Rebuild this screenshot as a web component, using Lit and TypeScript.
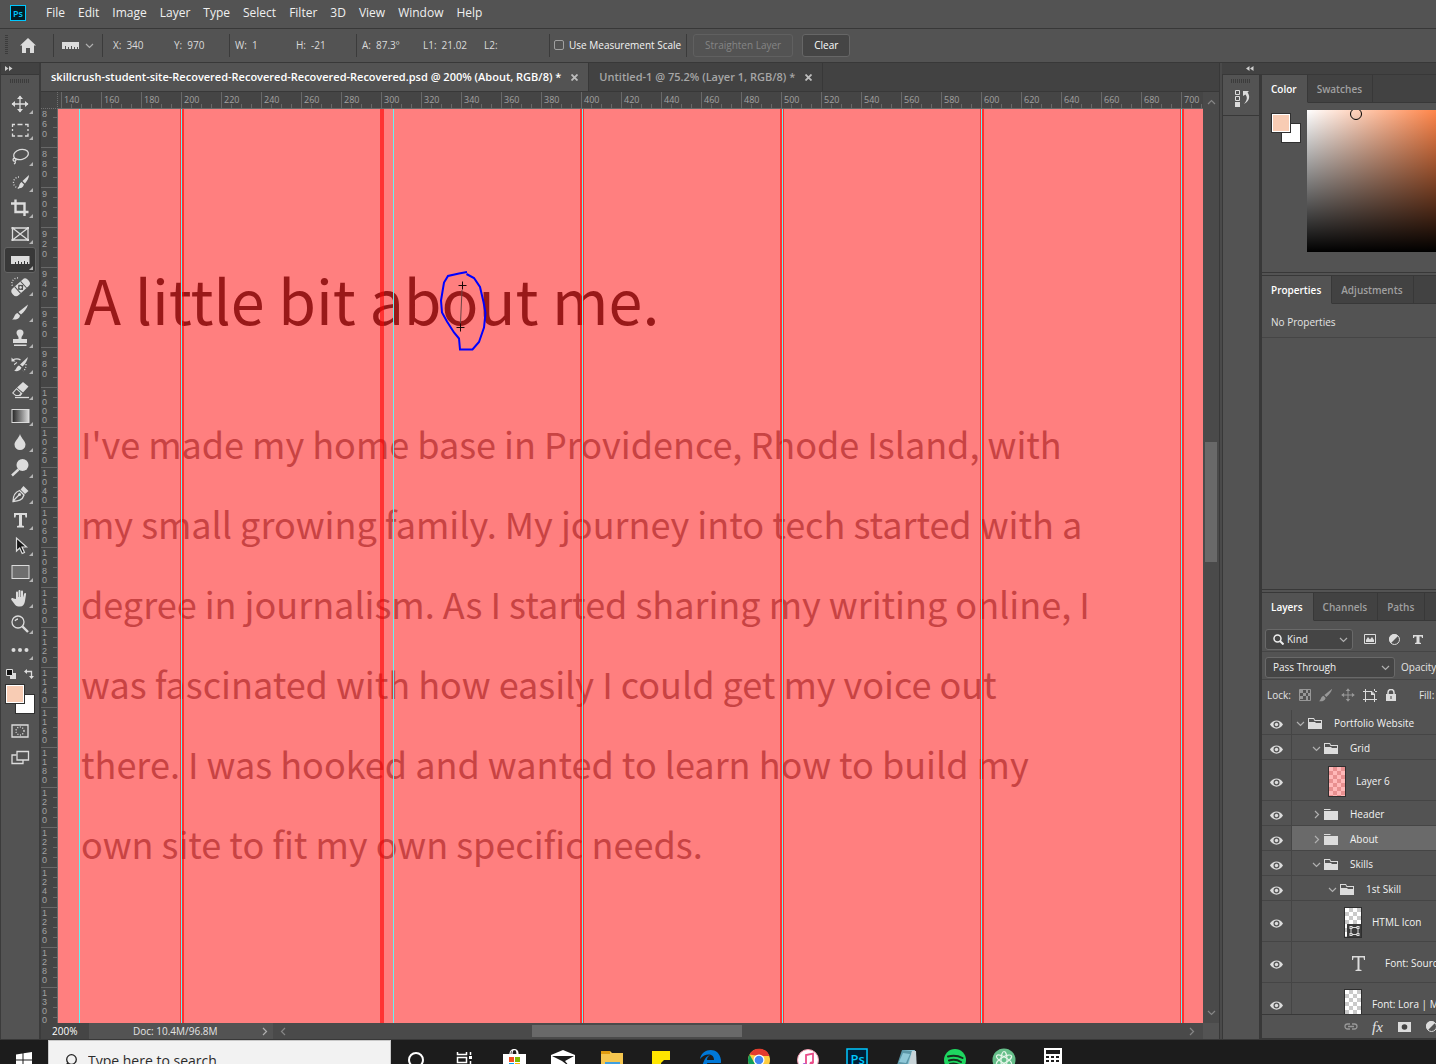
import { LitElement, html, svg, css, nothing } from "lit";
import { customElement, state } from "lit/decorators.js";
import { classMap } from "lit/directives/class-map.js";
import { styleMap } from "lit/directives/style-map.js";

const MENUS = ["File", "Edit", "Image", "Layer", "Type", "Select", "Filter", "3D", "View", "Window", "Help"];

const READOUTS = [
  [["X:", "340"], ["Y:", "970"]],
  [["W:", "1"], ["H:", "-21"]],
  [["A:", "87.3º"], ["L1:", "21.02"], ["L2:", ""]],
];

const TOOLS: { name: string; icon: unknown }[] = [
  { name: "Move", icon: svg`<path d="M12 4v16M4 12h16" class="l"/><path d="M12 3.500l3 3.500h-6zM12 20.500l3-3.500h-6zM3.500 12l3.500-3v6zM20.500 12l-3.500-3v6z"/>` },
  { name: "Rectangular marquee", icon: svg`<path d="M4.500 9V6.500H7M9.500 6.500h5M17 6.500h3V9M20 11v2M20 15.500V18h-3M14.500 18h-5M7 18H4.500v-2.500M4.500 13v-2" class="l"/>` },
  { name: "Lasso", icon: svg`<ellipse cx="13" cy="10.500" rx="7.500" ry="5" transform="rotate(-14 13 10.500)" class="l"/><path d="M7 14c-3 0-2 4 0 3s1-3-1-2.500M7 17c1 1 0 2.500-1 3" class="l"/>` },
  { name: "Quick selection", icon: svg`<path d="M11 7a5.500 5.500 0 1 0 0 11" class="l dots"/><path d="M21 5l-6.500 6 2.500 2.500c2-2.500 4-5.500 4-8.500zM13.500 12l2.500 2.500c-1 3-3 4-6.500 4 2-1.500 1.500-5 4-6.500z"/>` },
  { name: "Crop", icon: svg`<path d="M7.500 3.500v12.500h13M3 7.500h13.500V20" class="l w2"/>` },
  { name: "Frame", icon: svg`<path d="M4.500 6h15.500v12H4.500zM4.500 6L20 18M20 6L4.500 18" class="l"/><path d="M3.500 5h2v2h-2zM19 5h2v2h-2zM3.500 17h2v2h-2zM19 17h2v2h-2z"/>` },
  { name: "Ruler", icon: svg`<path d="M3 8h18.500v8h-1.500v-2h-1v2h-2v-3h-1v3h-2v-2h-1v2h-2v-3h-1v3H8v-2H7v2H3z"/>` },
  { name: "Healing brush", icon: svg`<path d="M10 4a5.500 5.500 0 0 0-5.500 8" class="l dots"/><g transform="rotate(-42 13 13)"><rect x="2" y="8.500" width="21" height="9" rx="4"/><path d="M8 8.500h1v9H8zM16 8.500h1v9h-1z" fill="#535353"/><path d="M12.500 9.500l3.500 3.500-3.500 3.500L9 13z" fill="#535353"/><circle cx="12.500" cy="13" r="1.300"/></g>` },
  { name: "Brush", icon: svg`<path d="M20 4.500L10.500 12l2.500 2.500c3-2.500 6-6 7-10zM9.500 13l2.500 2.500c-.5 3.500-4 4.500-8 4 2.500-1 2-5.500 5.500-6.500z"/>` },
  { name: "Clone stamp", icon: svg`<path d="M10.500 11.500c0-1.500-2-2.500-2-4.500a3.500 3.500 0 0 1 7 0c0 2-2 3-2 4.500v1.500H19v4H5v-4h5.500zM6 18.500h12.500v1.500H6z"/>` },
  { name: "History brush", icon: svg`<path d="M20 5l-8 7.500 2.500 2c3-2.500 4.500-5.500 5.500-9.500zM11 13.500l2.500 2c-1 3.500-4 4-7.500 3.500 2.500-1 2-4.500 5-5.500z"/><path d="M4.500 8c3-1.500 6-1.500 8 0M9 10.500c-2 1-2 2-3 2" class="l"/><path d="M18 12c0 4-1 6-3 7" class="l dots"/><path d="M3.500 5.500v4h4z"/>` },
  { name: "Eraser", icon: svg`<path d="M15 4l5.500 4.500-5.500 6-6-5zM8.500 10l6 5.500-2 2.500H7.500L4 15z"/><path d="M8.500 11.500l4 3.500-1.500 2H8l-2.500-2z" fill="#535353"/><path d="M7 19.500h14" class="l"/>` },
  { name: "Gradient", icon: svg`<rect x="4" y="5.500" width="17" height="13" fill="url(#ramp)" stroke="#dcdcdc"/>` },
  { name: "Blur", icon: svg`<path d="M12 4c1 4 5.500 7 5.500 10.500a5.500 5.500 0 0 1-11 0c0-3.500 4.500-6.500 5.500-10.500z"/>` },
  { name: "Dodge", icon: svg`<circle cx="14.500" cy="9" r="6"/><path d="M10.500 13.500L4 19.500" class="l w2"/>` },
  { name: "Pen", icon: svg`<path d="M5 19.500c0-5 1-9 6.500-11l4.500 4.500c-1.500 5.500-6 6-11 6.500zM5 19l6-6" class="l"/><circle cx="11.500" cy="12.500" r="1.500"/><path d="M12.500 7.500l3-3.500 5 5-3.500 3z"/>` },
  { name: "Type", icon: svg`<path d="M6 5h13v4.500h-1.500L17 7h-3v10.500l2 .5v1.500H9V18l2-.5V7H8l-.5 2.500H6z"/>` },
  { name: "Path selection", icon: svg`<path d="M8.500 4v13l3.200-3 2.500 5.500 2.300-1-2.500-5.500h4.500z" fill="#161616" stroke="#dcdcdc" stroke-width="1.200"/>` },
  { name: "Rectangle", icon: svg`<rect x="4" y="5.500" width="17" height="13" fill="#6e6e6e" stroke="#dcdcdc"/>` },
  { name: "Hand", icon: svg`<path d="M8 13V6.500c0-1.500 2-1.500 2 0V11h.5V5c0-1.500 2-1.500 2 0v6h.5V5.500c0-1.500 2-1.500 2 0V11.500l1-3.500c.5-1.500 2.500-1 2 .5L17 15c-.5 3.500-2 5.500-5 5.500h-1.500c-2 0-3-1-4-2.500L3.500 14c-1-1.500.5-2.500 2-1.500z"/>` },
  { name: "Zoom", icon: svg`<circle cx="10" cy="10" r="6" class="l"/><path d="M14.500 14.500l5.500 5.500" class="l w2"/><path d="M7 9a3.500 3.500 0 0 1 3-2" class="l"/>` },
  { name: "More tools", icon: svg`<circle cx="5.500" cy="12" r="2"/><circle cx="12" cy="12" r="2"/><circle cx="18.500" cy="12" r="2"/>` },
];

const BODY_LINES = [
  "I've made my home base in Providence, Rhode Island, with",
  "my small growing family. My journey into tech started with a",
  "degree in journalism. As I started sharing my writing online, I",
  "was fascinated with how easily I could get my voice out",
  "there. I was hooked and wanted to learn how to build my",
  "own site to fit my own specific needs.",
];

const BANDS = [122, 322, 522, 722, 922, 1122];
const GUIDES = [21, 123, 335, 524, 724, 923, 1123];

type Layer = { name: string; level: number; kind: "open" | "closed" | "pink" | "shape" | "type" | "pixel"; selected?: boolean };
const LAYERS: Layer[] = [
  { name: "Portfolio Website", level: 0, kind: "open" },
  { name: "Grid", level: 1, kind: "open" },
  { name: "Layer 6", level: 2, kind: "pink" },
  { name: "Header", level: 1, kind: "closed" },
  { name: "About", level: 1, kind: "closed", selected: true },
  { name: "Skills", level: 1, kind: "open" },
  { name: "1st Skill", level: 2, kind: "open" },
  { name: "HTML Icon", level: 3, kind: "shape" },
  { name: "Font: Source Sans Pro", level: 3, kind: "type" },
  { name: "Font: Lora | Medium", level: 3, kind: "pixel" },
];

const TASKS: { name: string; icon: unknown }[] = [
  { name: "Cortana", icon: svg`<circle cx="12" cy="12" r="7" fill="none" stroke="#fff" stroke-width="2"/>` },
  { name: "Task view", icon: svg`<path d="M4.500 4v2.500h9V4M4.500 20v-2.500h9V20M4.500 9.500h9v5h-9zM17.500 4v3M17.500 13v7" fill="none" stroke="#fff" stroke-width="1.500"/><path d="M16 8h3v3h-3z" fill="#fff"/>` },
  { name: "Store", icon: svg`<path d="M8 6c0-6 8-6 8 0M10 6c0-6 5-6 5 0" fill="none" stroke="#fff" stroke-width="1.200"/><path d="M1 6h23v18H1z" fill="#fff"/><path d="M7 9h5v5H7z" fill="#f25022"/><path d="M13 9h5v5h-5z" fill="#7fba00"/><path d="M7 15h5v5H7z" fill="#00a4ef"/><path d="M13 15h5v5h-5z" fill="#ffb900"/>` },
  { name: "Mail", icon: svg`<path d="M0 7l12-5 12 5v16H0z" fill="#fff"/><path d="M1 8h22l-9 5 5 6-8-6z" fill="#1c1c1c"/>` },
  { name: "File explorer", icon: svg`<path d="M1 3h9l2 2h11v18H1z" fill="#f5c64f"/><path d="M1 3h9v3H1z" fill="#e09c10"/><path d="M5 14h15v9H5z" fill="#3f9fe0"/>` },
  { name: "Sticky notes", icon: svg`<path d="M3 3h18v20H3z" fill="#ffe600"/><path d="M21 12v11h-9v-8l3-3z" fill="#1c1c1c"/>` },
  { name: "Edge", icon: svg`<path d="M2 11C4 0 21-2 23 12v3H9c1 6 8 6 12 3.500v4.500C9 28 2 20 6 13c1-3 3-5 6-6-2 1.500-3 3-3 5h7c0-7-9-7-14-1z" fill="#0078d7"/>` },
  { name: "Chrome", icon: svg`<circle cx="12" cy="12" r="11" fill="#ffcd40"/><path d="M2.500 6.500A11 11 0 0 1 22.500 8H12z" fill="#e33b2e"/><path d="M2.500 6.500L8 16l3 7A11 11 0 0 1 2.500 6.500z" fill="#109d58"/><circle cx="12" cy="12" r="5.500" fill="#fff"/><circle cx="12" cy="12" r="4.300" fill="#4285f4"/>` },
  { name: "iTunes", icon: svg`<circle cx="12" cy="12" r="10.500" fill="#fff" stroke="#f29ab0"/><path d="M10 17V7l7-1.500V15" fill="none" stroke="#ea4c89" stroke-width="1.800"/><circle cx="8.500" cy="17" r="2" fill="#a55ad8"/><circle cx="15.500" cy="15.500" r="2" fill="#ea4c89"/>` },
  { name: "Photoshop", icon: svg`<rect x="2" y="1" width="20" height="22" fill="#001e36" stroke="#00c8ff" stroke-width="1.500"/><text x="5.500" y="16" class="pstext" font-size="13">Ps</text>` },
  { name: "Notepad", icon: svg`<path d="M9 2h12l-5 21H2z" fill="#8fc8d8"/><path d="M8 2l10 1-7 20H1z" fill="#5c97a8"/><path d="M9 5l7 1-4 9-7-1z" fill="#8fc8d8"/><path d="M18 3l4 0 1 20h-10z" fill="#c8d4d8"/>` },
  { name: "Spotify", icon: svg`<circle cx="12" cy="12" r="11" fill="#1ed760"/><path d="M5 8.500c5-1.500 10-1 14.500 1.500M6 12.500c4-1.200 8.500-.8 12 1.500M7 16c3.500-1 6.500-.6 9.500 1.200" fill="none" stroke="#16301e" stroke-width="2" stroke-linecap="round"/>` },
  { name: "Atom", icon: svg`<circle cx="12" cy="12" r="11.500" fill="#66bf8a"/><g fill="none" stroke="#e3f5e8" stroke-width="1.200"><ellipse cx="12" cy="12" rx="3" ry="8.500"/><ellipse cx="12" cy="12" rx="3" ry="8.500" transform="rotate(60 12 12)"/><ellipse cx="12" cy="12" rx="3" ry="8.500" transform="rotate(120 12 12)"/></g>` },
  { name: "Calculator", icon: svg`<path d="M3 0h18v24H3z" fill="#fff"/><path d="M5 2h14v4H5zM5 8h3v2H5zM10 8h3v2h-3zM15 8h3v2h-3zM5 12h3v2H5zM10 12h3v2h-3zM15 12h3v2h-3z" fill="#1c1c1c"/>` },
];

const range = (from: number, to: number, step: number) =>
  Array.from({ length: Math.floor((to - from) / step) + 1 }, (_, i) => from + i * step);

const icon = (body: unknown, size = 24, cls = "") =>
  html`<svg class="ic ${cls}" width=${size} height=${size} viewBox="0 0 24 24" aria-hidden="true">${body}</svg>`;

const chevron = (dir: "up" | "down" | "left" | "right") => {
  const d = { up: "M1 6l3.500-3.500L8 6", down: "M1 3l3.500 3.500L8 3", left: "M6 1L2.500 4.500 6 8", right: "M3 1l3.500 3.500L3 8" }[dir];
  return html`<svg class="chev" width="9" height="9" viewBox="0 0 9 9" aria-hidden="true"><path d=${d} /></svg>`;
};

const doubleArrow = (flip: boolean) => html`<svg width="8" height="5" viewBox="0 0 8 5" aria-hidden="true">
  <path d=${flip ? "M3.500 0v5L0 2.500zM7.500 0v5L4 2.500z" : "M0 0v5l3.500-2.500zM4 0v5l3.500-2.500z"} fill="#cfcfcf" />
</svg>`;

const psLogo = html`<svg width="16" height="16" viewBox="0 0 16 16" aria-hidden="true">
  <rect x=".5" y=".5" width="15" height="15" fill="#001d26" stroke="#00c8ff" />
  <text x="3" y="11.500" class="pstext" font-size="9">Ps</text>
</svg>`;

@customElement("app-root")
export class AppRoot extends LitElement {
  @state() private activeTool = "Ruler";

  static styles = css`
    :host { display: flex; flex-direction: column; height: 100vh; overflow: hidden; background: #535353; color: #e4e4e4; font: 10px/16px "Open Sans", "Noto Sans", sans-serif; }
    * { box-sizing: border-box; }
    button, input, select { font: inherit; color: inherit; background: none; border: 0; padding: 0; margin: 0; border-radius: 0; outline: 0; }
    button { display: flex; align-items: center; justify-content: center; flex: none; }
    svg { flex: none; display: block; }
    h1, h2, p, ul { margin: 0; padding: 0; font-weight: inherit; list-style: none; }
    .ic { fill: #dcdcdc; }
    .l { fill: none; stroke: #dcdcdc; stroke-width: 1.3; }
    .w2 { stroke-width: 2.4; }
    .dots { stroke-dasharray: 1 1.6; }
    .chev path { fill: none; stroke: #b0b0b0; stroke-width: 1.2; }
    .vbar .chev path, .hbar .chev path { stroke: #868686; }
    .pstext { fill: #00c8ff; font-family: "Open Sans", sans-serif; font-weight: 600; }

    .menubar { display: flex; align-items: center; flex: none; height: 29px; padding-left: 10px; padding-bottom: 3px; border-bottom: 1px solid #383838; }
    .menubar nav { display: flex; gap: 13px; margin-left: 20px; }
    .menubar button { font-size: 12px; line-height: 20px; color: #f0f0f0; }

    .options { display: flex; align-items: center; flex: none; height: 34px; border-bottom: 1px solid #383838; padding: 0 0 1px 5px; color: #dadada; }
    .grip-v { width: 3px; height: 20px; background: repeating-linear-gradient(#3c3c3c 0 1px, transparent 1px 2px); }
    .home { width: 40px; margin-right: 5px; }
    .sep { width: 1px; height: 23px; background: #3b3b3b; flex: none; }
    .preset { width: 48px; gap: 6px; }
    .group { display: flex; width: 126px; padding-left: 5px; flex: none; }
    .group:first-of-type { padding-left: 10px; }
    .group.wide { width: 192px; }
    .field { display: flex; gap: 5px; width: 61px; flex: none; }
    .field:last-child { flex: 1; min-width: 0; }
    .scale { display: flex; align-items: center; gap: 5px; width: 136px; padding-left: 4px; flex: none; color: #f4f4f4; white-space: nowrap; }
    .scale input { appearance: none; width: 10px; height: 10px; border: 1px solid #a0a0a0; border-radius: 2px; flex: none; }
    .push { height: 23px; padding: 0 11px; border: 1px solid #666; border-radius: 3px; background: #454545; color: #fff; margin-left: 9px; }
    .push:disabled { background: none; border-color: #606060; color: #858585; margin-left: 6px; }

    .work { display: flex; flex: 1; min-height: 0; }
    .tools { display: flex; flex-direction: column; flex: none; width: 41px; border-left: 1px solid #3b3b3b; border-right: 2px solid #3b3b3b; align-items: center; }
    .cap { display: flex; align-items: center; align-self: stretch; height: 12px; flex: none; background: #424242; border-bottom: 1px solid #383838; padding-left: 4px; }
    .grip-h { width: 20px; height: 4px; margin: 4px 0 8px; background: repeating-linear-gradient(90deg, #3c3c3c 0 1px, transparent 1px 2px); flex: none; }
    .tool { position: relative; width: 32px; height: 26px; border: 1px solid transparent; border-radius: 3px; }
    .tool.on { background: #383838; border-color: #646464; }
    .tool::after { content: ""; position: absolute; right: 2px; bottom: 2px; border: 2px solid transparent; border-right-color: #b4b4b4; border-bottom-color: #b4b4b4; }
    .tool .ic, .modes .ic { width: 24px; height: 24px; }
    .mini { display: flex; justify-content: space-between; width: 28px; margin: 6px 0 5px; }
    .chips { display: grid; grid-template: repeat(3, 10px) / repeat(3, 10px); flex: none; }
    .fg, .bg { border: 1px solid #303030; width: auto; height: auto; }
    .fg { grid-area: 1 / 1 / 3 / 3; background: #f8ccb4; box-shadow: inset 0 0 0 1px #fff; z-index: 1; }
    .bg { grid-area: 2 / 2 / 4 / 4; background: #fff; }
    .modes { display: flex; flex-direction: column; align-items: center; gap: 3px; padding-top: 5px; }

    .doc { display: flex; flex-direction: column; flex: 1; min-width: 0; border-right: 1px solid #383838; }
    .tabs { display: flex; flex: none; height: 29px; background: #424242; border-bottom: 1px solid #383838; color: #a6a6a6; font-weight: 600; font-size: 11px; }
    .tab { display: flex; align-items: center; border-right: 1px solid #383838; padding: 0 10px; gap: 10px; white-space: nowrap; flex: none; }
    .tab.on { background: #535353; color: #fff; }
    .stage { display: grid; grid-template: 17px minmax(0, 1fr) 16px / 17px minmax(0, 1fr) 16px; flex: 1; min-height: 0; }
    .corner { background: #454545; border-right: 1px dotted #707070; border-bottom: 1px dotted #707070; }
    .rule-h { display: flex; overflow: hidden; background: #454545; border-bottom: 1px solid #686868; padding-left: 3px; color: #a2a2a2; }
    .cell-h { flex: none; width: 40px; border-left: 1px solid #686868; padding-left: 2px; line-height: 16px; font-size: 9px;
      background: repeating-linear-gradient(90deg, transparent 0 9px, #686868 9px 10px) 0 100% / 39px 4px no-repeat; }
    .rule-v { overflow: hidden; background: #454545; border-right: 1px solid #686868; color: #a2a2a2; font-family: "Liberation Sans", sans-serif; }
    .cell-v { height: 40px; border-top: 1px solid #686868; padding: 1px 0 0 1px; font-size: 9px; line-height: 10px;
      background: repeating-linear-gradient(transparent 0 9px, #686868 9px 10px) 100% 0 / 4px 39px no-repeat; }
    .cell-v:first-child { height: 38px; padding-top: 0; border-top: 0; background-position-y: -1px; }
    .cell-v.long { line-height: 9px; }
    .digit { display: block; }
    .canvas { position: relative; overflow: hidden; background: #ff7f7f; font-family: "Noto Sans CJK SC", sans-serif; padding: 142px 0 0 23px; white-space: nowrap; }
    .canvas h1 { font-size: 61px; line-height: 96px; color: #991919; padding-left: 3px; }
    .copy { font-size: 36px; line-height: 80px; color: #c84343; padding-top: 56px; }
    .band, .guide { position: absolute; top: 0; bottom: 0; }
    .band { width: 4px; background: rgba(255, 0, 0, 0.6); }
    .guide { width: 1px; background: #66f2f2; }
    .marks { position: absolute; left: 0; top: 0; }
    .vbar, .hbar { display: flex; align-items: center; background: #4a4a4a; }
    .vbar { flex-direction: column; grid-row: 1 / 3; grid-column: 3; padding: 6px 0; }
    .track { flex: 1; align-self: stretch; display: flex; }
    .vbar .track { flex-direction: column; align-items: center; }
    .hbar .track { align-items: center; }
    .thumb { background: #696969; flex: none; }
    .vbar .thumb { width: 12px; }
    .hbar .thumb { height: 12px; }
    .status { grid-column: 1 / 3; display: flex; }
    .zoom { width: 48px; padding-left: 11px; color: #fff; flex: none; background: #454545; }
    .info { display: flex; align-items: center; width: 184px; background: #535353; padding: 0 4px 0 44px; flex: none; }
    .info span { flex: 1; }
    .hbar { flex: 1; padding: 0 7px 0 6px; }

    .side { display: grid; grid-template: 12px minmax(0, 1fr) / 39px 175px; flex: none; border-left: 2px solid #4a4a4a; }
    .side .cap { grid-column: 1 / 3; padding-left: 24px; }
    .strip { border-left: 1px solid #383838; border-right: 2px solid #383838; display: flex; flex-direction: column; align-items: center; }
    .strip button { align-self: stretch; height: 29px; padding: 0 0 7px 2px; border-bottom: 1px solid #383838; }
    .strip .grip-h { margin-bottom: 4px; }
    .panels { display: flex; flex-direction: column; min-width: 0; overflow: hidden; border-left: 1px solid #383838; }
    .panel { border-bottom: 1px solid #383838; flex: none; }
    .panel + .panel { margin-top: 2px; border-top: 1px solid #383838; }
    .ptabs { display: flex; height: 28px; background: #424242; }
    .ptab { padding: 0 10px 0 9px; border-right: 1px solid #383838; border-bottom: 1px solid #383838; color: #a0a0a0; font-weight: 600; }
    .ptab.on { background: #535353; color: #fff; border-bottom-color: transparent; }
    .ptabs::after { content: ""; flex: 1; border-bottom: 1px solid #383838; }
    .color { display: flex; gap: 6px; height: 169px; padding: 7px 0 20px 9px; }
    .color .chips { align-self: flex-start; padding-top: 3px; }
    .picker { position: relative; flex: 1; background: linear-gradient(to top, #000, transparent), linear-gradient(to right, #fff, #ff8549); overflow: hidden; }
    .ring { position: absolute; left: 43px; top: -2px; width: 12px; height: 12px; border: 1px solid #000; border-radius: 6px; }
    .props { flex: 1; }
    .props p { height: 34px; padding: 10px 8px 0 9px; border-bottom: 1px solid #454545; }
    .line { display: flex; align-items: center; border-bottom: 1px solid #454545; white-space: nowrap; }
    .filter { height: 31px; padding: 6px 0 0 3px; }
    .blend { height: 28px; padding: 3px 0 0 3px; }
    .lock { height: 30px; padding-left: 5px; gap: 8px; border: 0; }
    .lock .fill { margin-left: 14px; }
    .drop { display: flex; align-items: center; height: 21px; border: 1px solid #696969; border-radius: 3px; background: #454545; padding: 0 4px 0 7px; color: #f0f0f0; flex: none; }
    .drop select { appearance: none; flex: 1; min-width: 0; line-height: 16px; }
    .kind { width: 88px; gap: 3px; margin-right: 5px; }
    .mode { width: 130px; margin-right: 6px; }
    .filter > button { width: 24px; }
    .dim { opacity: 0.5; }
    .list { height: 304px; overflow: hidden; }
    .row { display: flex; height: 25px; border-bottom: 1px solid #454545; white-space: nowrap; align-items: stretch; }
    .row.tall { height: 41px; }
    .row.sel .body { background: #6a6a6a; }
    .eye { width: 30px; border-right: 1px solid #454545; padding-top: 4px; }
    .body { display: flex; align-items: center; flex: 1; min-width: 0; padding: 2px 0 0 3px; color: #f2f2f2; }
    .indent { flex: none; }
    .twist { width: 11px; display: flex; justify-content: center; flex: none; }
    .folder { margin: 0 12px 0 2px; }
    .thumbnail { width: 18px; height: 31px; border: 1px solid #2e2e2e; margin-right: 10px; flex: none; display: flex; align-items: flex-end; justify-content: flex-end;
      background: repeating-conic-gradient(#cacaca 0 25%, #fff 0 50%) 0 0 / 8px 8px; }
    .thumbnail.pink { background: repeating-conic-gradient(#e89090 0 25%, #ffb8b8 0 50%) 0 0 / 8px 8px; }
    .glyph { width: 41px; padding-left: 7px; flex: none; }
    .foot { display: flex; align-items: center; height: 24px; padding-left: 81px; gap: 12px; border-top: 1px solid #383838; }
    .foot button { width: 15px; }
    .fx { font: italic 15px/16px "Liberation Serif", serif; }

    .taskbar { display: flex; align-items: flex-start; flex: none; height: 25px; border-top: 1px solid #383838; background: #1c1c1c; overflow: hidden; }
    .taskbar button { height: 40px; width: 49px; }
    .taskbar .start { width: 48px; }
    .search { display: flex; align-items: center; gap: 11px; height: 40px; width: 343px; padding-left: 14px; background: #f2f2f2; border: 1px solid #c8c8c8; border-bottom: 0; color: #2b2b2b; flex: none; }
    .search input { flex: 1; min-width: 0; font-size: 14px; line-height: 20px; }
    .search input::placeholder { color: #2b2b2b; opacity: 1; }
  `;

  private tabHead(names: string[]) {
    return html`<div class="ptabs" role="tablist">
      ${names.map((n, i) => html`<button role="tab" class=${classMap({ ptab: true, on: i === 0 })}>${n}</button>`)}
    </div>`;
  }

  private chips() {
    return html`<div class="chips"><button class="fg" aria-label="Foreground color"></button><button class="bg" aria-label="Background color"></button></div>`;
  }

  private closeMark() {
    return html`<svg width="7" height="7" viewBox="0 0 7 7" aria-hidden="true"><path d="M.5.5l6 6M6.500.5l-6 6" stroke="#bdbdbd" stroke-width="1.800" /></svg>`;
  }

  private layerIcon(l: Layer) {
    if (l.kind === "open" || l.kind === "closed") {
      return html`<span class="twist">${chevron(l.kind === "open" ? "down" : "right")}</span>
        <svg class="folder" width="14" height="11" viewBox="0 0 14 11" aria-hidden="true">
          ${l.kind === "open"
            ? svg`<path d="M0 0h6l1 2h7v9H0z" fill="#dcdcdc"/><path d="M1 1h4.500l1 2H13v2H8L7 4H1z" fill="#535353"/>`
            : svg`<path d="M0 0h6l1 1H0zM0 2h14v9H0z" fill="#dcdcdc"/>`}
        </svg>`;
    }
    if (l.kind === "type") {
      return html`<span class="glyph"><svg width="15" height="15" viewBox="0 0 15 15" aria-hidden="true"><path d="M1 0h13v4h-1l-.5-2.500H8.500v12l2 .5v1h-6v-1l2-.5v-12H2.500L2 4H1z" fill="#dcdcdc" /></svg></span>`;
    }
    return html`<span class=${classMap({ thumbnail: true, pink: l.kind === "pink" })}>
      ${l.kind === "shape"
        ? html`<svg width="14" height="13" viewBox="0 0 14 13" aria-hidden="true"><path d="M0 0h14v13H0z" fill="#3a3a3a" /><path d="M4 3.500h7v7H4z" fill="none" stroke="#dcdcdc" /><path d="M2.500 2h3v3h-3zM9.500 2h3v3h-3zM2.500 9h3v3h-3zM9.500 9h3v3h-3z" fill="#dcdcdc" /><path d="M3.500 3h1v1h-1zM10.500 3h1v1h-1zM3.500 10h1v1h-1zM10.500 10h1v1h-1z" fill="#3a3a3a" /></svg>`
        : nothing}
    </span>`;
  }

  private layerRow(l: Layer) {
    const folder = l.kind === "open" || l.kind === "closed";
    const indent = folder ? l.level * 16 : 1 + l.level * 16;
    return html`<li class=${classMap({ row: true, tall: !folder, sel: !!l.selected })}>
      <button class="eye" aria-label="Toggle visibility of ${l.name}">
        <svg width="13" height="9" viewBox="0 0 13 9" aria-hidden="true"><path d="M0 4.500C3-1 10-1 13 4.500 10 10 3 10 0 4.500z" fill="#dcdcdc" /><circle cx="6.500" cy="4.500" r="3" fill="#535353" /><circle cx="6.500" cy="4.500" r="1.700" fill="#dcdcdc" /></svg>
      </button>
      <div class="body">
        <span class="indent" style=${styleMap({ width: `${indent}px` })}></span>
        ${this.layerIcon(l)}<span>${l.name}</span>
      </div>
    </li>`;
  }

  render() {
    return html`
      <header class="menubar">
        ${psLogo}
        <nav>${MENUS.map((m) => html`<button>${m}</button>`)}</nav>
      </header>

      <div class="options">
        <span class="grip-v"></span>
        <button class="home" aria-label="Home"><svg width="16" height="15" viewBox="0 0 16 15"><path d="M8 0l8 7.500h-2V15h-4v-5H6v5H2V7.500H0z" fill="#dcdcdc" /></svg></button>
        <span class="sep"></span>
        <button class="preset" aria-label="Tool preset">
          <svg width="17" height="7" viewBox="0 0 17 7"><path d="M0 0h17v7h-1V5h-1v2h-2V5h-1v2h-2V4H9v3H7V5H6v2H4V4H3v3H0z" fill="#dcdcdc" /></svg>${chevron("down")}
        </button>
        <span class="sep"></span>
        ${READOUTS.map((g) => html`<div class=${classMap({ group: true, wide: g.length > 2 })}>
          ${g.map(([k, v]) => html`<span class="field"><span>${k}</span><span>${v}</span></span>`)}
        </div><span class="sep"></span>`)}
        <label class="scale"><input type="checkbox" />Use Measurement Scale</label>
        <span class="sep"></span>
        <button class="push" disabled>Straighten Layer</button>
        <button class="push">Clear</button>
      </div>

      <div class="work">
        <aside class="tools">
          <div class="cap">${doubleArrow(false)}</div>
          <span class="grip-h"></span>
          ${TOOLS.map((t) => html`<button
            class=${classMap({ tool: true, on: t.name === this.activeTool })}
            aria-label=${t.name}
            @click=${() => (this.activeTool = t.name)}
          >${icon(t.name === "Gradient" ? svg`<defs><linearGradient id="ramp"><stop offset="0" stop-color="#222"/><stop offset="1" stop-color="#ddd"/></linearGradient></defs>${t.icon}` : t.icon)}</button>`)}
          <div class="mini">
            <button aria-label="Default colors"><svg width="10" height="10" viewBox="0 0 10 10"><path d="M4 4h6v6H4z" fill="#dcdcdc" /><path d="M.5.5h6v6h-6z" fill="#111" stroke="#dcdcdc" /></svg></button>
            <button aria-label="Swap colors"><svg width="10" height="10" viewBox="0 0 10 10"><path d="M2 2.500h5.500V8" fill="none" stroke="#dcdcdc" stroke-width="1.300" /><path d="M3 0v5L0 2.500zM5 7h5l-2.500 3z" fill="#dcdcdc" /></svg></button>
          </div>
          ${this.chips()}
          <div class="modes">
            <button aria-label="Quick mask">${icon(svg`<path d="M4 6h16v12H4z" class="l"/><circle cx="12" cy="12" r="4" class="l dots"/>`)}</button>
            <button aria-label="Screen mode">${icon(svg`<path d="M9 5.500h11.500V14H9z" class="l"/><path d="M8.500 9H4v8.500h11V14" class="l"/>`)}</button>
          </div>
        </aside>

        <main class="doc">
          <div class="tabs" role="tablist">
            <button class="tab on" role="tab"><span>skillcrush-student-site-Recovered-Recovered-Recovered-Recovered.psd @ 200% (About, RGB/8) *</span>${this.closeMark()}</button>
            <button class="tab" role="tab"><span>Untitled-1 @ 75.2% (Layer 1, RGB/8) *</span>${this.closeMark()}</button>
          </div>
          <div class="stage">
            <div class="corner"></div>
            <div class="rule-h">${range(140, 700, 20).map((n) => html`<span class="cell-h">${n}</span>`)}</div>
            <div class="vbar">
              ${chevron("up")}
              <div class="track">
                <span style=${styleMap({ flex: "335 0 0" })}></span>
                <span class="thumb" style=${styleMap({ height: "120px" })}></span>
                <span style=${styleMap({ flex: "445 0 0" })}></span>
              </div>
              ${chevron("down")}
            </div>
            <div class="rule-v">
              ${range(860, 1300, 20).map((n) => html`<div class=${classMap({ "cell-v": true, long: n > 999 })}>
                ${String(n).split("").map((d) => html`<span class="digit">${d}</span>`)}
              </div>`)}
            </div>
            <section class="canvas">
              <h1>A little bit about me.</h1>
              <div class="copy">${BODY_LINES.map((t) => html`<p>${t}</p>`)}</div>
              ${BANDS.map((x) => html`<i class="band" style=${styleMap({ left: `${x}px` })}></i>`)}
              ${GUIDES.map((x) => html`<i class="guide" style=${styleMap({ left: `${x}px` })}></i>`)}
              <svg class="marks" width="640" height="300" viewBox="58 109 640 300" aria-hidden="true">
                <path d="M467 272l-8 1.500-11 2.500-4 6.500-1 6-2 12 1 12 5 9 7 11 5 6 1 11h12.500l6.500-7.500 5-14.500 1.500-14.500-2-11-3.500-15-6-9-7.500-4" fill="none" stroke="#0000ff" stroke-width="2" />
                <path d="M462 290l-1.500 33" stroke="#6c4444" />
                <path d="M458.500 285.500h8M462.500 281.500v8M456.500 327.500h8M460.500 323.500v8" stroke="#1a0808" />
              </svg>
            </section>
            <div class="status">
              <input class="zoom" aria-label="Zoom level" value="200%" />
              <div class="info"><span>Doc: 10.4M/96.8M</span>${chevron("right")}</div>
              <div class="hbar">
                ${chevron("left")}
                <div class="track">
                  <span style=${styleMap({ flex: "244 0 0" })}></span>
                  <span class="thumb" style=${styleMap({ width: "210px" })}></span>
                  <span style=${styleMap({ flex: "446 0 0" })}></span>
                </div>
                ${chevron("right")}
              </div>
            </div>
          </div>
        </main>

        <aside class="side">
          <div class="cap">${doubleArrow(true)}</div>
          <div class="strip">
            <span class="grip-h"></span>
            <button aria-label="History"><svg width="16" height="18" viewBox="0 0 16 18"><path d="M1.500 1.500h4v4h-4zM1.500 7.500h4v4h-4z" fill="none" stroke="#dcdcdc" /><path d="M1 13h5v5H1z" fill="#dcdcdc" /><path d="M9 2h6L13.500 3.500c3 4 2 8.500-3.500 11.500 3.500-4 3.500-7 1.500-9.500L9 7z" fill="#dcdcdc" /></svg></button>
          </div>
          <div class="panels">
            <section class="panel">
              ${this.tabHead(["Color", "Swatches"])}
              <div class="color">${this.chips()}<div class="picker"><i class="ring"></i></div></div>
            </section>
            <section class="panel props">
              ${this.tabHead(["Properties", "Adjustments"])}
              <p>No Properties</p>
            </section>
            <section class="panel">
              ${this.tabHead(["Layers", "Channels", "Paths"])}
              <div class="line filter">
                <label class="drop kind">
                  <svg width="11" height="11" viewBox="0 0 11 11" aria-hidden="true"><circle cx="4.500" cy="4.500" r="3.500" fill="none" stroke="#eee" stroke-width="1.500" /><path d="M7 7l3.500 3.500" stroke="#eee" stroke-width="2" /></svg>
                  <select aria-label="Filter type"><option>Kind</option></select>${chevron("down")}
                </label>
                <button aria-label="Pixel layers"><svg width="12" height="10" viewBox="0 0 12 10"><path d="M.5.5h11v9H.5z" fill="none" stroke="#dcdcdc" /><path d="M2 8V6l2-3 2 2.500L8 3l2 3v2z" fill="#dcdcdc" /></svg></button>
                <button aria-label="Adjustment layers"><svg width="11" height="11" viewBox="0 0 11 11"><circle cx="5.500" cy="5.500" r="5" fill="none" stroke="#dcdcdc" /><path d="M9 2a5 5 0 1 1-7 7z" transform="rotate(180 5.500 5.500)" fill="#dcdcdc" /></svg></button>
                <button aria-label="Type layers"><svg width="10" height="9" viewBox="0 0 10 9"><path d="M0 0h10v3H9L8.500 1.500h-2V7.500l1.500.5v1H2V8l1.500-.5v-6h-2L1 3H0z" fill="#dcdcdc" /></svg></button>
              </div>
              <div class="line blend">
                <label class="drop mode"><select aria-label="Blend mode"><option>Pass Through</option></select>${chevron("down")}</label>
                <span>Opacity:</span>
              </div>
              <div class="line lock">
                <span>Lock:</span>
                <button class="dim" aria-label="Lock transparency"><svg width="12" height="12" viewBox="0 0 12 12"><path d="M.5.5h11v11H.5z" fill="none" stroke="#dcdcdc" /><path d="M1 1h3v3H1zM7 1h2v3H7zM4 4h3v3H4zM9 4h2v3H9zM1 7h3v3H1zM7 7h2v4H7z" fill="#dcdcdc" /></svg></button>
                <button class="dim" aria-label="Lock pixels"><svg width="14" height="14" viewBox="4 4 17 16"><path d="M20 4.500L10.500 12l2.500 2.500c3-2.500 6-6 7-10zM9.500 13l2.500 2.500c-.5 3.500-4 4.500-8 4 2.500-1 2-5.500 5.500-6.500z" fill="#dcdcdc" /></svg></button>
                <button class="dim" aria-label="Lock position"><svg class="ic" width="14" height="14" viewBox="3 3 18 18">${TOOLS[0].icon}</svg></button>
                <button aria-label="Lock artboard"><svg width="14" height="13" viewBox="0 0 14 13"><path d="M2.500 0v13M0 2.500h9l2.500 2.500v5.500H0M11.500 10.500V13M11.500 10.500H14M11.500 0v2M12 2.500h2" fill="none" stroke="#dcdcdc" /><path d="M8 2l4 4H8z" fill="#dcdcdc" /></svg></button>
                <button aria-label="Lock all"><svg width="12" height="12" viewBox="0 0 12 12"><path d="M3 6V3.500a3 3 0 0 1 6 0V6" fill="none" stroke="#dcdcdc" stroke-width="1.500" /><path d="M1 5h10v7H1z" fill="#dcdcdc" /><path d="M5.500 7h1v3h-1z" fill="#444" /></svg></button>
                <span class="fill">Fill:</span>
              </div>
              <ul class="list">${LAYERS.map((l) => this.layerRow(l))}</ul>
              <div class="foot">
                <button class="dim" aria-label="Link layers"><svg width="14" height="7" viewBox="0 0 14 7"><path d="M6 1H3.500a2.500 2.500 0 0 0 0 5H6M8 1h2.500a2.500 2.500 0 0 1 0 5H8M4 3.500h6" fill="none" stroke="#dcdcdc" stroke-width="1.300" /></svg></button>
                <button class="fx" aria-label="Layer style">fx</button>
                <button aria-label="Add mask"><svg width="13" height="10" viewBox="0 0 13 10"><path d="M0 0h13v10H0z" fill="#dcdcdc" /><circle cx="6.500" cy="5" r="2.800" fill="#444" /></svg></button>
                <button aria-label="New adjustment"><svg width="11" height="11" viewBox="0 0 11 11"><circle cx="5.500" cy="5.500" r="5" fill="none" stroke="#dcdcdc" /><path d="M9 2a5 5 0 1 1-7 7z" transform="rotate(180 5.500 5.500)" fill="#dcdcdc" /></svg></button>
              </div>
            </section>
          </div>
        </aside>
      </div>

      <footer class="taskbar">
        <button class="start" aria-label="Start"><svg width="16" height="16" viewBox="0 0 16 16"><path d="M0 2.500L6.500 1.500v6H0zM7.500 1.300L16 0v7.500H7.500zM0 8.500h6.500v6L0 13.500zM7.500 8.500H16V16l-8.500-1.300z" fill="#fff" /></svg></button>
        <label class="search">
          <svg width="14" height="14" viewBox="0 0 14 14" aria-hidden="true"><circle cx="8.500" cy="5.500" r="4.800" fill="none" stroke="#222" stroke-width="1.300" /><path d="M5 9l-4.500 4.500" stroke="#222" stroke-width="1.300" /></svg>
          <input aria-label="Search" placeholder="Type here to search" />
        </label>
        ${TASKS.map((t) => html`<button aria-label=${t.name}>${icon(t.icon)}</button>`)}
      </footer>
    `;
  }
}
